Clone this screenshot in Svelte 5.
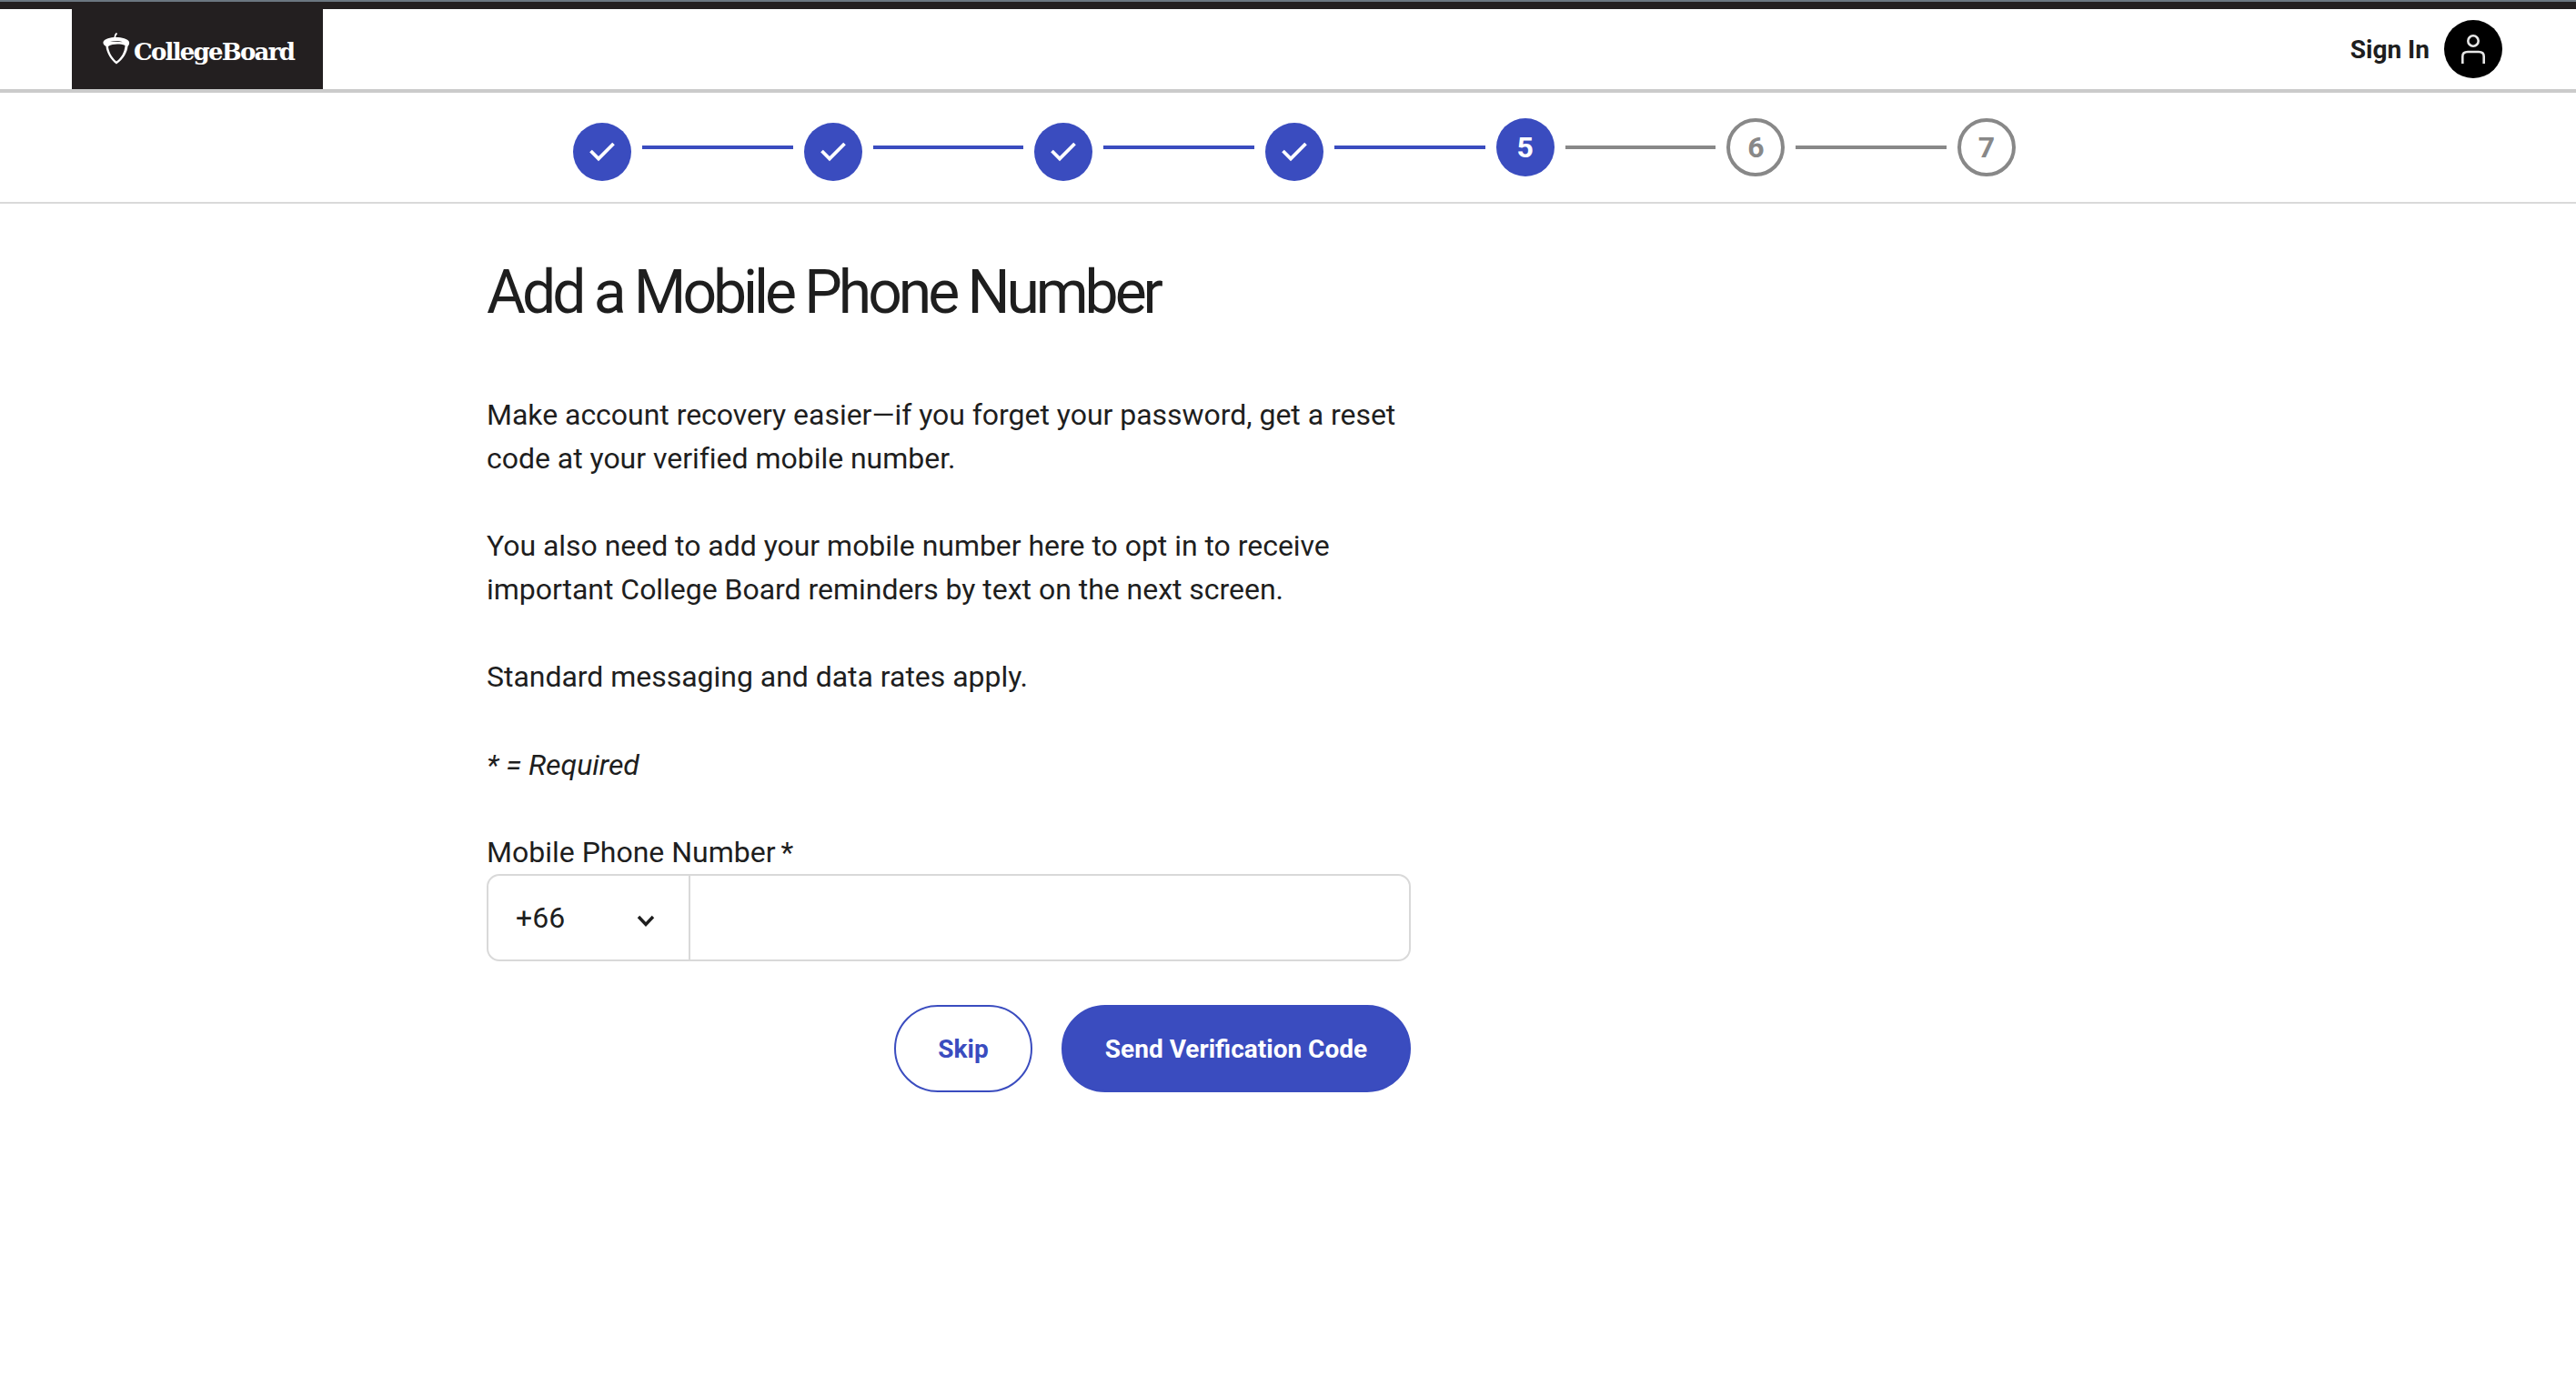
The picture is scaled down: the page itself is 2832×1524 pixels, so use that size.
<script>
  const steps = [1, 2, 3, 4, 5, 6, 7];
  const current = 5;
</script>

<div class="page">
  <header class="top">
    <div class="logo">
      <svg class="acorn" width="30" height="36" viewBox="0 0 30 36" aria-hidden="true">
        <path d="M15.5 0.5 C13.5 2 13 4 13.4 6.500" fill="none" stroke="#fff" stroke-width="1.8" />
        <path d="M0.500 10 C2 6.500 8 5 14.500 5 C21 5 27.500 6.500 29 10 C29.500 12 28.500 14 27.500 15 C27 21 23 29 15 34.500 C9 30 4 22 3.500 15 C1.500 14 0 12 0.500 10 Z" fill="#fff" />
        <path d="M6 15 C11 12 19 12 24.500 14 C24 21 20.500 27.500 15 31.500 C10 27.500 6.500 21 6 15 Z" fill="#231f20" />
        <path d="M8 9.800 C12 8.600 18 8.800 22 10.300 C17 10 12 10 8 9.800 Z" fill="#231f20" />
      </svg>
      <span class="wordmark">CollegeBoard</span>
    </div>
    <div class="signin">
      <span>Sign In</span>
      <span class="avatar">
        <svg width="26" height="32" viewBox="0 0 26 32" fill="none" stroke="#e6e6e6" stroke-width="2.600" aria-hidden="true">
          <circle cx="13" cy="7" r="5.700" />
          <path d="M1.300 32 V24 C1.300 21 3.500 19 7 19 H19 C22.500 19 24.700 21 24.700 24 V32" />
        </svg>
      </span>
    </div>
  </header>

  <nav class="stepper">
    {#each steps as s, i}
      {#if i > 0}
        <span class="line" class:on={s <= current}></span>
      {/if}
      {#if s < current}
        <span class="dot done">
          <svg width="28" height="22" viewBox="0 0 28 22" fill="none" stroke="#fff" stroke-width="3.800" aria-hidden="true">
            <path d="M1.500 10 L10 18.500 L26.500 2" />
          </svg>
        </span>
      {:else}
        <span class="dot" class:active={s === current} class:todo={s > current}>{s}</span>
      {/if}
    {/each}
  </nav>

  <main class="content">
    <h1>Add a Mobile Phone Number</h1>
    <p>Make account recovery easier—if you forget your password, get a reset code at your verified mobile number.</p>
    <p>You also need to add your mobile number here to opt in to receive important College Board reminders by text on the next screen.</p>
    <p>Standard messaging and data rates apply.</p>
    <p class="req"><em>* = Required</em></p>
    <label class="label" for="phone">Mobile Phone Number<span class="star">*</span></label>
    <div class="field">
      <div class="code">
        <span>+66</span>
        <svg width="20" height="13" viewBox="0 0 20 13" fill="none" stroke="#1e1e1e" stroke-width="3.400" aria-hidden="true">
          <path d="M2 2 L10 10.500 L18 2" />
        </svg>
      </div>
      <input id="phone" type="text" />
    </div>
    <div class="actions">
      <button class="skip">Skip</button>
      <button class="send">Send Verification Code</button>
    </div>
  </main>
</div>

<style>
  :global(body) {
    margin: 0;
    background: #fff;
    font-family: Roboto, "Liberation Sans", sans-serif;
    color: #1e1e1e;
  }
  .page {
    min-height: 1524px;
  }
  .top {
    height: 88px;
    border-top: 10px solid #231f20;
    border-bottom: 4px solid #cbcbcb;
    display: flex;
    justify-content: space-between;
    align-items: stretch;
    padding: 0 81px 0 79px;
    position: relative;
  }
  .top::before {
    content: "";
    position: absolute;
    left: 0;
    right: 0;
    top: -10px;
    height: 2px;
    background: #6b7680;
  }
  .logo {
    width: 276px;
    background: #231f20;
    display: flex;
    align-items: center;
    box-sizing: border-box;
    padding: 0 0 0 34px;
    gap: 4px;
    color: #fff;
  }
  .acorn {
    margin-bottom: 1px;
  }
  .wordmark {
    font-family: "DejaVu Serif", "Liberation Serif", serif;
    font-weight: 700;
    font-size: 26px;
    letter-spacing: -1.750px;
    margin-top: 6px;
  }
  .signin {
    display: flex;
    align-items: center;
    gap: 16px;
    font-size: 28px;
    font-weight: 700;
    color: #1e1e1e;
  }
  .avatar {
    width: 64px;
    height: 64px;
    border-radius: 50%;
    background: #000;
    display: flex;
    align-items: center;
    justify-content: center;
  }
  .stepper {
    height: 120px;
    border-bottom: 2px solid #d9d9d9;
    display: flex;
    justify-content: center;
    align-items: center;
    gap: 12px;
    padding-left: 14px;
  }
  .line {
    width: 165.670px;
    height: 4px;
    background: #888;
  }
  .line.on {
    background: #3a4cbf;
  }
  .dot {
    width: 64px;
    height: 64px;
    box-sizing: border-box;
    border-radius: 50%;
    display: flex;
    align-items: center;
    justify-content: center;
    font-size: 32px;
    font-weight: 700;
  }
  .done {
    background: #3a4cbf;
    margin-top: 10px;
  }
  .active {
    background: #3a4cbf;
    color: #fff;
  }
  .todo {
    border: 4px solid #888;
    color: #888;
  }
  .content {
    width: 1016px;
    margin-left: 535px;
    display: flex;
    flex-direction: column;
  }
  h1 {
    margin: 58px 0 70px;
    font-size: 66px;
    line-height: 80px;
    font-weight: 400;
    letter-spacing: -4.050px;
    color: #1e1e1e;
  }
  p {
    margin: 0 0 48px;
    font-size: 32px;
    line-height: 48px;
    letter-spacing: -0.030px;
  }
  .req {
    margin-top: 1px;
  }
  .label {
    font-size: 32px;
    line-height: 48px;
    display: block;
  }
  .star {
    margin-left: 6px;
  }
  .field {
    height: 96px;
    box-sizing: border-box;
    border: 2px solid #d9d9d9;
    border-radius: 14px;
    display: flex;
  }
  .code {
    width: 222px;
    box-sizing: border-box;
    border-right: 2px solid #d9d9d9;
    display: flex;
    align-items: center;
    justify-content: space-between;
    padding: 0 37px 0 30px;
    font-size: 32px;
  }
  .code svg {
    margin-top: 6px;
  }
  input {
    flex: 1;
    border: 0;
    outline: 0;
    background: transparent;
    min-width: 0;
  }
  .actions {
    display: flex;
    justify-content: flex-end;
    gap: 32px;
    margin-top: 48px;
  }
  button {
    height: 96px;
    border-radius: 48px;
    font-family: inherit;
    font-size: 28px;
    font-weight: 700;
    box-sizing: border-box;
    border: 2px solid #3a4cbf;
  }
  .skip {
    width: 152px;
    background: #fff;
    color: #3a4cbf;
  }
  .send {
    width: 384px;
    background: #3a4cbf;
    color: #fff;
  }
</style>
